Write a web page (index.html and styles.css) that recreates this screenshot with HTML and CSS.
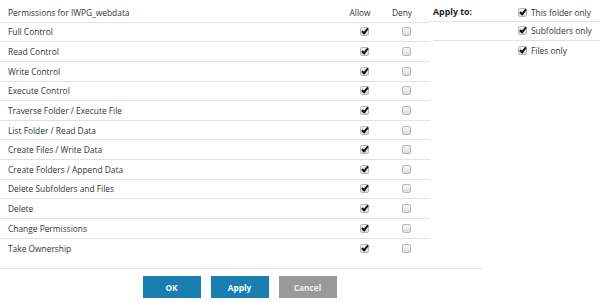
FILE: index.html
```html
<!DOCTYPE html>
<html>
<head>
<meta charset="utf-8">
<link rel="stylesheet" href="styles.css">
</head>
<body>
<div class="dialog">
  <div class="top">
    <div class="perm">
      <div class="row head">
        <span class="name">Permissions for IWPG_webdata</span>
        <span class="col allow">Allow</span>
        <span class="col deny">Deny</span>
      </div>
      <div class="row"><span class="name">Full Control</span><span class="col allow"><span class="cb on"></span></span><span class="col deny"><span class="cb"></span></span></div>
      <div class="row"><span class="name">Read Control</span><span class="col allow"><span class="cb on"></span></span><span class="col deny"><span class="cb"></span></span></div>
      <div class="row"><span class="name">Write Control</span><span class="col allow"><span class="cb on"></span></span><span class="col deny"><span class="cb"></span></span></div>
      <div class="row"><span class="name">Execute Control</span><span class="col allow"><span class="cb on"></span></span><span class="col deny"><span class="cb"></span></span></div>
      <div class="row"><span class="name">Traverse Folder / Execute File</span><span class="col allow"><span class="cb on"></span></span><span class="col deny"><span class="cb"></span></span></div>
      <div class="row"><span class="name">List Folder / Read Data</span><span class="col allow"><span class="cb on"></span></span><span class="col deny"><span class="cb"></span></span></div>
      <div class="row"><span class="name">Create Files / Write Data</span><span class="col allow"><span class="cb on"></span></span><span class="col deny"><span class="cb"></span></span></div>
      <div class="row"><span class="name">Create Folders / Append Data</span><span class="col allow"><span class="cb on"></span></span><span class="col deny"><span class="cb"></span></span></div>
      <div class="row"><span class="name">Delete Subfolders and Files</span><span class="col allow"><span class="cb on"></span></span><span class="col deny"><span class="cb"></span></span></div>
      <div class="row"><span class="name">Delete</span><span class="col allow"><span class="cb on"></span></span><span class="col deny"><span class="cb"></span></span></div>
      <div class="row"><span class="name">Change Permissions</span><span class="col allow"><span class="cb on"></span></span><span class="col deny"><span class="cb"></span></span></div>
      <div class="row last"><span class="name">Take Ownership</span><span class="col allow"><span class="cb on"></span></span><span class="col deny"><span class="cb"></span></span></div>
    </div>
    <div class="apply">
      <div class="arow head">
        <span class="alabel">Apply to:</span>
        <span class="opt"><span class="cb on"></span>This folder only</span>
      </div>
      <div class="arow second">
        <span class="alabel"></span>
        <span class="opt"><span class="cb on"></span>Subfolders only</span>
      </div>
      <div class="arow last">
        <span class="alabel"></span>
        <span class="opt"><span class="cb on"></span>Files only</span>
      </div>
    </div>
  </div>
  <div class="footer">
    <button class="btn primary">OK</button>
    <button class="btn primary">Apply</button>
    <button class="btn muted">Cancel</button>
  </div>
</div>
</body>
</html>
```
FILE: styles.css
```css
html, body {
  margin: 0;
  padding: 0;
  background: #fff;
}
body {
  font-family: "Open Sans", "Segoe UI", sans-serif;
  font-size: 8.4px;
  color: #333;
}
.dialog {
  padding-top: 3px;
}
.top {
  display: flex;
}
.perm {
  width: 430px;
  flex: none;
}
.row {
  display: flex;
  align-items: center;
  height: 19.64px;
  box-sizing: border-box;
  padding-right: 6px;
  border-bottom: 1px solid #e2e2e2;
  white-space: nowrap;
}
.row.last {
  border-bottom: none;
}
.name {
  flex: 1;
  padding-left: 8px;
}
.col {
  display: flex;
  justify-content: center;
  box-sizing: border-box;
}
.allow {
  width: 40px;
}
.deny {
  width: 44px;
}
.row .col {
  padding-left: 9px;
}
.row.head .col {
  padding-left: 0;
}
.apply {
  flex: 1;
  min-width: 0;
}
.arow {
  display: flex;
  align-items: center;
  height: 19px;
  box-sizing: border-box;
  white-space: nowrap;
}
.arow.head {
  border-bottom: 1px solid #e2e2e2;
}
.arow.second {
  height: 18.5px;
  border-bottom: 1px solid #e2e2e2;
  margin-left: 3px;
}
.arow.last {
  margin-left: 3px;
}
.alabel {
  flex: none;
  width: 88px;
  padding-left: 3px;
  box-sizing: border-box;
  font-weight: bold;
  font-size: 8.8px;
  color: #222;
}
.arow.second .alabel,
.arow.last .alabel {
  width: 85px;
}
.opt {
  flex: none;
  display: flex;
  align-items: center;
}
.opt .cb {
  margin-right: 4px;
}
.cb {
  display: inline-block;
  width: 7px;
  height: 7px;
  border: 1px solid #b8b8b8;
  border-radius: 2px;
  background: linear-gradient(#f6f6f6, #dcdcdc);
  position: relative;
  box-sizing: content-box;
}
.cb.on::after {
  content: "";
  position: absolute;
  left: 2px;
  top: -1px;
  width: 2px;
  height: 5px;
  border-right: 2px solid #111;
  border-bottom: 2px solid #111;
  transform: rotate(40deg);
}
.footer {
  width: 483px;
  margin-top: 10px;
  border-top: 1px solid #e2e2e2;
  padding: 7px 4px 0 0;
  box-sizing: border-box;
  display: flex;
  justify-content: center;
  gap: 10px;
}
.btn {
  width: 58px;
  height: 22px;
  border: none;
  font-family: "Open Sans", "Segoe UI", sans-serif;
  font-size: 8.3px;
  font-weight: bold;
  color: #fff;
  padding: 0;
}
.primary {
  background: #197fb2;
}
.muted {
  background: #999;
  color: #eee;
}
```
